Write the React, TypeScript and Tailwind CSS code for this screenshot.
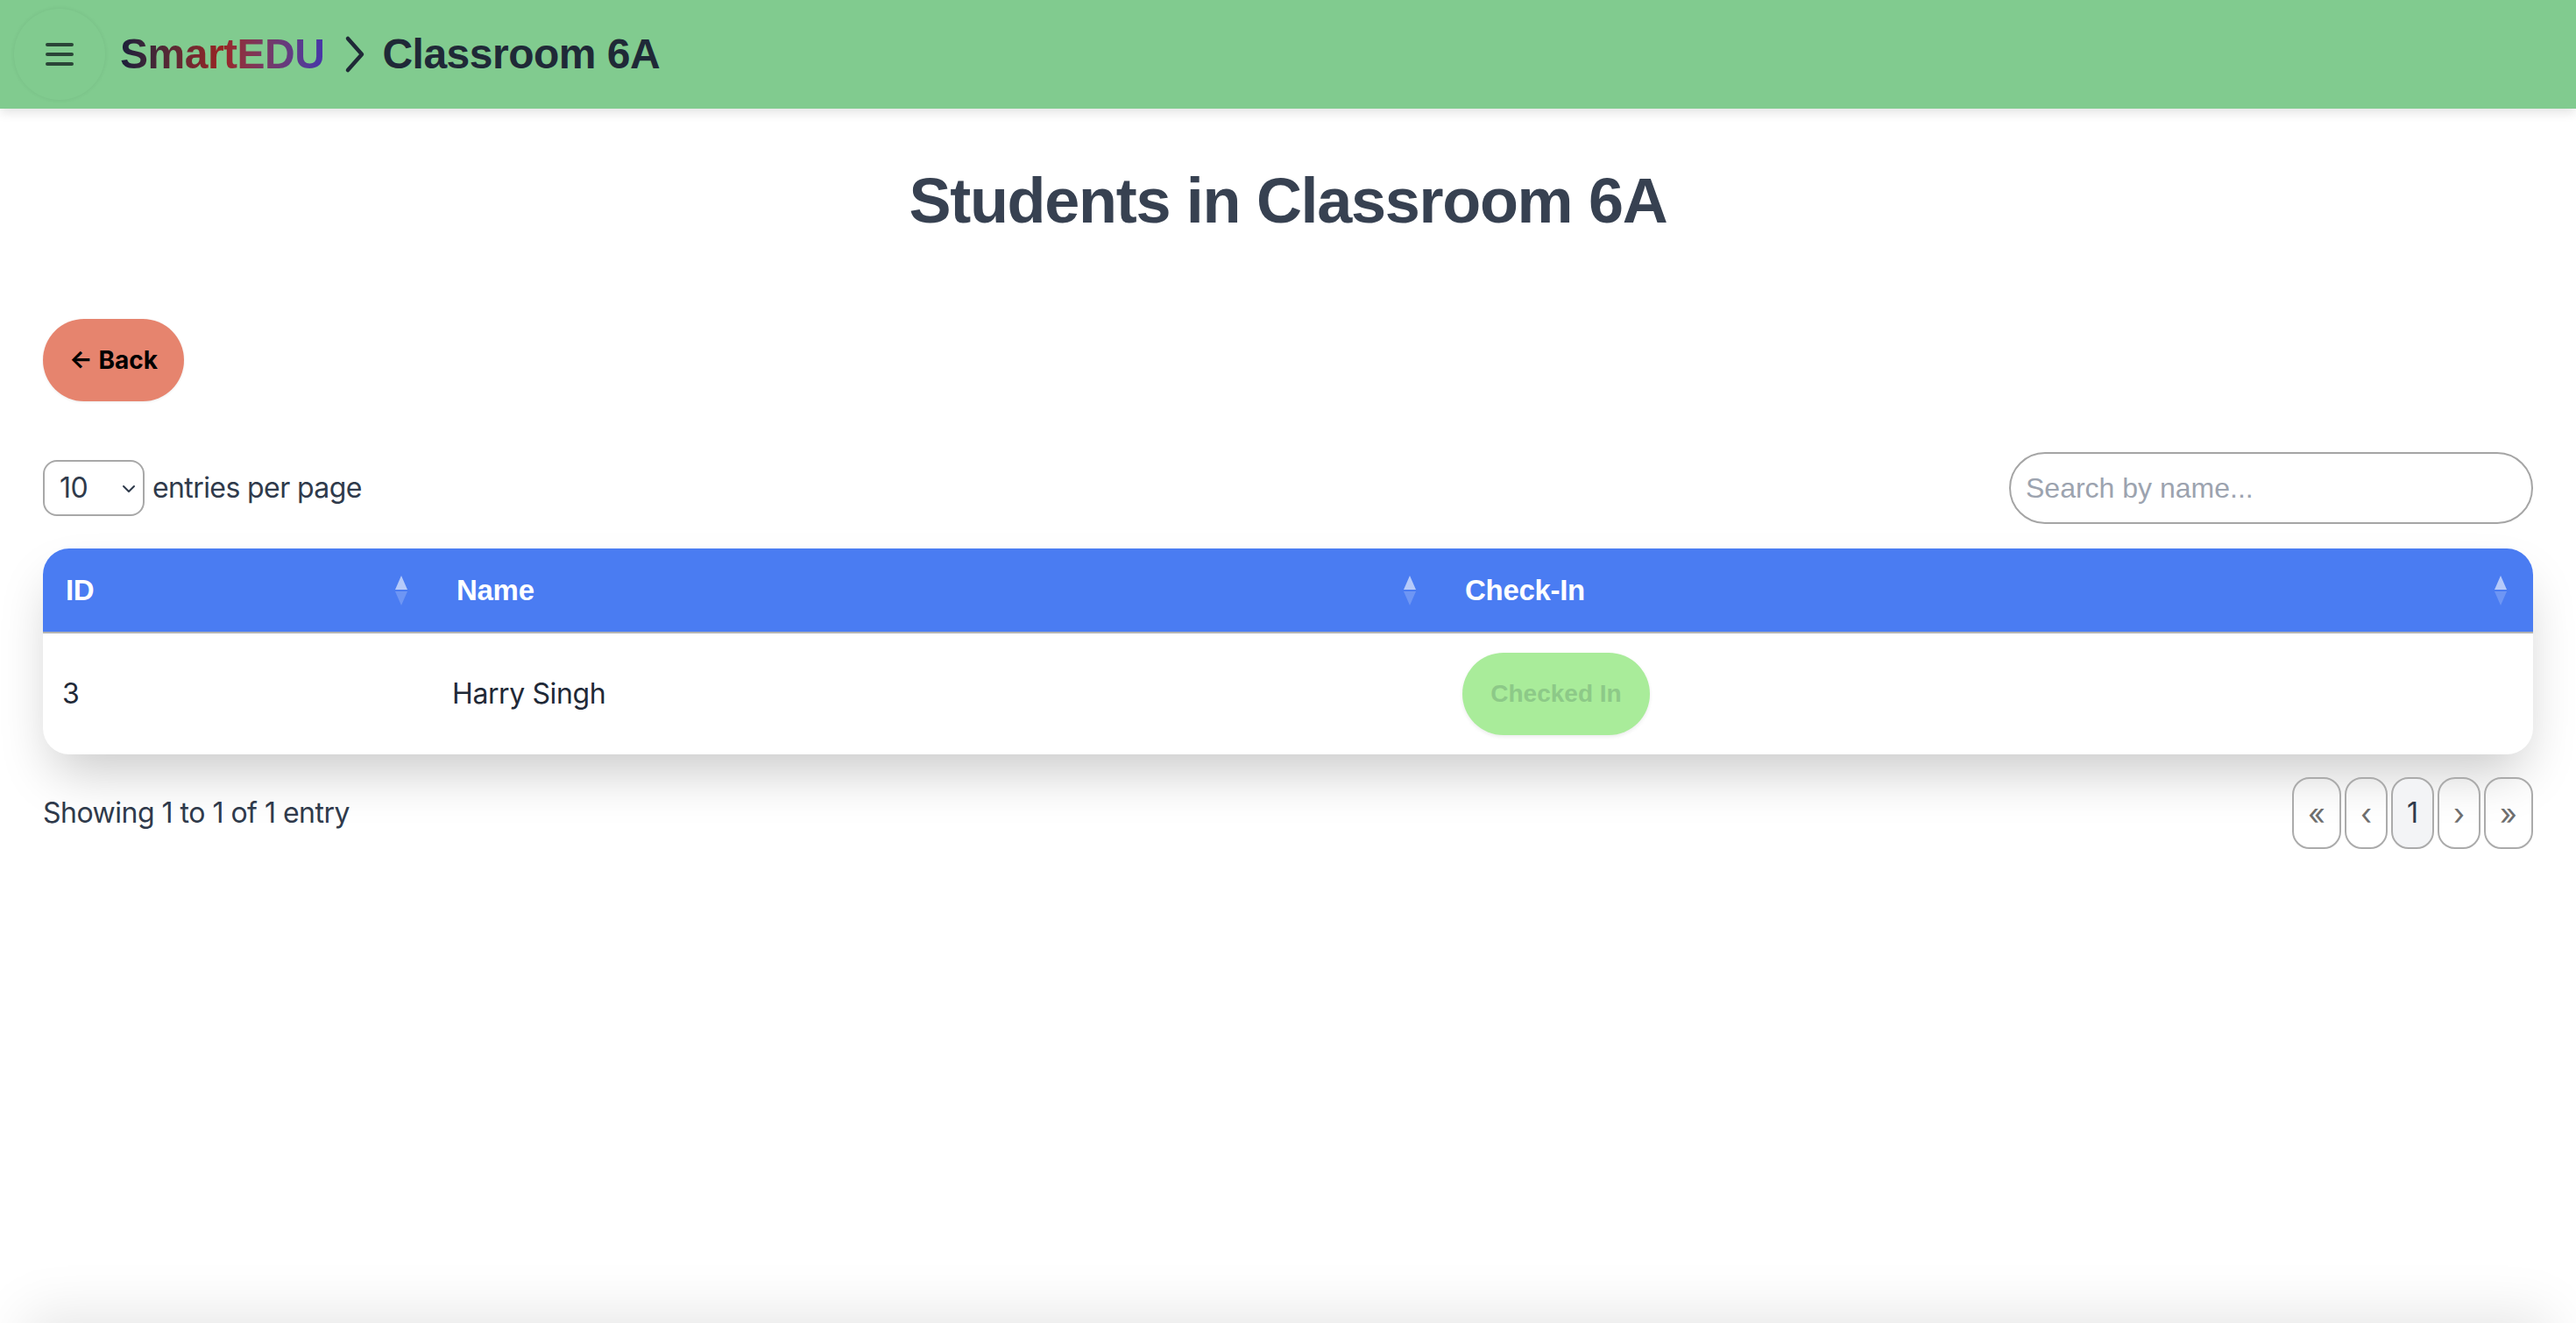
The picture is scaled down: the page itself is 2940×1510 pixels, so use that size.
import React from "react";

const helv = "font-['Liberation_Sans',Arial,sans-serif]";
const inter = "font-['Inter','Noto_Sans',sans-serif]";

function SortIcon() {
  return (
    <svg width="16" height="36" viewBox="0 0 16 36" className="absolute right-[29px] top-[30px]">
      <path d="M8 1 L15 17 L1 17 Z" fill="#ffffff" fillOpacity="0.6" strokeLinejoin="round" />
      <path d="M1 19 L15 19 L8 35 Z" fill="#ffffff" fillOpacity="0.2" />
    </svg>
  );
}

export default function App() {
  return (
    <div className="bg-white">
      <div className="min-h-[1510px] flex flex-col">
        <header className="h-[124px] bg-[#81CB8F] flex items-center pl-4 shadow-[0_4px_12px_rgba(0,0,0,0.12)] relative z-10">
          <button className="w-[104px] h-[104px] rounded-full flex items-center justify-center shadow-[0_0_5px_rgba(0,0,0,0.07)]">
            <svg width="32" height="26" viewBox="0 0 32 26">
              <g stroke="#2a4537" strokeWidth="4" strokeLinecap="round">
                <line x1="2" y1="2" x2="30" y2="2" />
                <line x1="2" y1="13" x2="30" y2="13" />
                <line x1="2" y1="24" x2="30" y2="24" />
              </g>
            </svg>
          </button>
          <div className={`ml-[17px] flex items-center ${helv} font-bold text-[48px] tracking-[-0.5px]`}>
            <span className="bg-gradient-to-r from-[#1a1f3a] via-[#9a2222] to-[#4634aa] bg-clip-text text-transparent">SmartEDU</span>
            <svg width="26" height="44" viewBox="0 0 26 44" className="ml-[22px] mr-[18px]">
              <polyline points="5,4 21,22 5,40" fill="none" stroke="#1f2937" strokeWidth="4.5" strokeLinecap="round" strokeLinejoin="round" />
            </svg>
            <span className="text-[#1f2937]">Classroom 6A</span>
          </div>
        </header>

        <main className="flex-1 px-[49px]">
          <h1 className={`${helv} font-bold text-[72px] leading-[80px] tracking-[-1.3px] text-[#374151] text-center mt-[65px]`}>
            Students in Classroom 6A
          </h1>

          <button className={`${inter} mt-[95px] h-[94px] w-[161px] rounded-full bg-[#E6846E] text-black font-bold text-[28px] flex items-center justify-center shadow-[0_1px_3px_rgba(0,0,0,0.08)]`}>
            ← Back
          </button>

          <div className="mt-[58px] flex items-center justify-between h-[82px]">
            <div className={`flex items-center ${inter} text-[32px] tracking-[-0.6px] text-[#2f3a4b]`}>
              <div className="relative">
                <select className={`appearance-none w-[116px] h-[64px] rounded-[16px] border-2 border-[#a8a8a8] pl-[17px] bg-white text-[32px] text-[#2f3a4b] ${inter}`} defaultValue="10">
                  <option>5</option>
                  <option>10</option>
                  <option>15</option>
                  <option>20</option>
                  <option>25</option>
                </select>
                <svg width="16" height="10" viewBox="0 0 16 10" className="absolute right-[10px] top-[28px] pointer-events-none">
                  <polyline points="2,2 8,8 14,2" fill="none" stroke="#2f3a4b" strokeWidth="2" strokeLinecap="round" strokeLinejoin="round" />
                </svg>
              </div>
              <span className="ml-[9px]">entries per page</span>
            </div>
            <input
              placeholder="Search by name..."
              className={`w-[598px] h-[82px] rounded-full border-2 border-[#a5a5a5] pl-[17px] ${helv} text-[32px] placeholder:text-[#9ca3af] outline-none`}
            />
          </div>

          <div className="mt-[28px] rounded-[30px] bg-white shadow-[0_30px_60px_-12px_rgba(0,0,0,0.22)] overflow-hidden">
            <table className="w-full table-fixed border-collapse">
              <colgroup>
                <col className="w-[446px]" />
                <col className="w-[1151px]" />
                <col />
              </colgroup>
              <thead>
                <tr className={`bg-[#4A7CF2] h-[96px] border-b-2 border-[#b3b3b3] ${helv} text-white font-bold text-[33px] tracking-[-0.3px]`}>
                  <th className="relative text-left pl-[26px]">ID<SortIcon /></th>
                  <th className="relative text-left pl-[26px]">Name<SortIcon /></th>
                  <th className="relative text-left pl-[26px]">Check-In<SortIcon /></th>
                </tr>
              </thead>
              <tbody>
                <tr className={`h-[139px] ${inter} text-[32px] tracking-[-0.4px] text-[#1f2937]`}>
                  <td className="pl-[22px]">3</td>
                  <td className="pl-[21px]">Harry Singh</td>
                  <td className="pl-[23px]">
                    <button className={`${helv} tracking-normal w-[214px] h-[94px] rounded-full bg-[#A9EC9A] text-[#8dc988] font-bold text-[28px] shadow-[0_2px_4px_rgba(0,0,0,0.08)]`}>
                      Checked In
                    </button>
                  </td>
                </tr>
              </tbody>
            </table>
          </div>

          <div className="mt-[26px] flex items-center justify-between">
            <span className={`${inter} text-[32px] tracking-[-0.5px] text-[#2f3a4b]`}>Showing 1 to 1 of 1 entry</span>
            <div className={`flex gap-[4px] ${inter}`}>
              <button className="w-[56px] h-[82px] rounded-[20px] border-2 border-[#ababab] text-[34px] text-[#6e6e6e] flex items-center justify-center">«</button>
              <button className="w-[49px] h-[82px] rounded-[20px] border-2 border-[#ababab] text-[34px] text-[#6e6e6e] flex items-center justify-center">‹</button>
              <button className="w-[49px] h-[82px] rounded-[20px] border-2 border-[#ababab] bg-[#f3f4f6] text-[32px] text-[#2f3a4b] flex items-center justify-center">1</button>
              <button className="w-[49px] h-[82px] rounded-[20px] border-2 border-[#ababab] text-[34px] text-[#6e6e6e] flex items-center justify-center">›</button>
              <button className="w-[56px] h-[82px] rounded-[20px] border-2 border-[#ababab] text-[34px] text-[#6e6e6e] flex items-center justify-center">»</button>
            </div>
          </div>
        </main>
      </div>
      <footer className="mx-[30px] h-[200px] bg-[#f0f0f0] shadow-[0_-10px_60px_rgba(0,0,0,0.1)]" />
    </div>
  );
}
